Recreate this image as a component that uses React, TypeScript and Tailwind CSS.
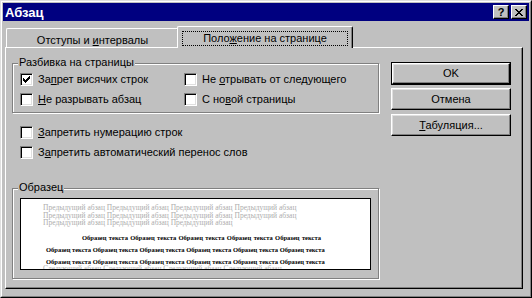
import React from "react";

const UI = "font-['Liberation_Sans',Arial,sans-serif] text-[11px] leading-[13px] text-black";

function Check({ checked }: { checked?: boolean }) {
  return (
    <div className="w-[13px] h-[13px] shrink-0 border border-t-[#808080] border-l-[#808080] border-r-white border-b-white bg-white shadow-[inset_1px_1px_0_#000,inset_-1px_-1px_0_#dfdfdf] flex items-center justify-center">
      {checked && (
        <svg width="7" height="7" viewBox="0 0 7 7" shapeRendering="crispEdges">
          <path
            fill="#000"
            d="M6 0h1v1h-1z M5 1h2v1h-2z M0 2h1v1h-1z M4 2h3v1h-3z M0 3h2v1h-2z M3 3h3v1h-3z M0 4h5v1h-5z M1 5h3v1h-3z M2 6h1v1h-1z"
          />
        </svg>
      )}
    </div>
  );
}

function Row({ checked, children }: { checked?: boolean; children: React.ReactNode }) {
  return (
    <div className="flex items-center gap-[5px] h-[13px] whitespace-nowrap">
      <Check checked={checked} />
      <span>{children}</span>
    </div>
  );
}

function U({ children }: { children: React.ReactNode }) {
  return <span className="underline decoration-1 underline-offset-[1px]">{children}</span>;
}

function Btn({ children, def }: { children: React.ReactNode; def?: boolean }) {
  const inner = (
    <div className="h-full w-full border border-t-white border-l-white border-r-black border-b-black shadow-[inset_-1px_-1px_0_#808080,inset_1px_1px_0_#dfdfdf] flex items-center justify-center">
      {children}
    </div>
  );
  if (def) return <div className="h-[23px] border border-black">{inner}</div>;
  return <div className="h-[22px]">{inner}</div>;
}

const GREY = "Предыдущий абзац";
const BLACK = "Образец текста";

export default function App() {
  return (
    <div className={`w-[532px] h-[298px] bg-[#c0c0c0] border border-t-[#dfdfdf] border-l-[#dfdfdf] border-r-black border-b-black ${UI}`}>
      <div className="h-full border border-t-white border-l-white border-r-[#808080] border-b-[#808080] p-px flex flex-col">
        {/* Title bar */}
        <div className="h-[18px] shrink-0 bg-[#000080] flex items-center pl-[2px] pr-[2px]">
          <span className="text-white font-bold text-[13px] leading-[15px] flex-1">Абзац</span>
          <div className="flex gap-[2px]">
            <div className="w-[16px] h-[14px] bg-[#c0c0c0] border border-t-white border-l-white border-r-black border-b-black shadow-[inset_-1px_-1px_0_#808080] flex items-center justify-center">
              <span className="font-bold text-[11px] leading-[11px] mt-[1px]">?</span>
            </div>
            <div className="w-[16px] h-[14px] bg-[#c0c0c0] border border-t-white border-l-white border-r-black border-b-black shadow-[inset_-1px_-1px_0_#808080] flex items-center justify-center">
              <svg width="8" height="7" viewBox="0 0 8 7" shapeRendering="crispEdges">
                <path
                  fill="#000"
                  d="M0 0h2v1h-2z M6 0h2v1h-2z M1 1h2v1h-2z M5 1h2v1h-2z M2 2h4v1h-4z M3 3h2v1h-2z M2 4h4v1h-4z M1 5h2v1h-2z M5 5h2v1h-2z M0 6h2v1h-2z M6 6h2v1h-2z"
                />
              </svg>
            </div>
          </div>
        </div>

        {/* Tabs */}
        <div className="h-[26px] shrink-0 flex items-end pl-[3px]">
          <div className="w-[173px] h-[19px] border-l border-t border-white border-r border-r-black rounded-t-[2px] shadow-[inset_-1px_0_0_#808080] flex justify-center pt-[5px]">
            <span>
              Отступы и <U>и</U>нтервалы
            </span>
          </div>
          <div className="relative z-10 -ml-[2px] -mb-px w-[176px] h-[22px] bg-[#c0c0c0] border-l border-t border-white border-r border-r-black rounded-t-[2px] shadow-[inset_-1px_0_0_#808080] px-[4px] pt-[4px]">
            <div className="h-[15px] border border-dotted border-black flex items-center justify-center">
              <span>
                Поло<U>ж</U>ение на странице
              </span>
            </div>
          </div>
        </div>

        {/* Panel */}
        <div className="ml-[2px] w-[518px] h-[242px] shrink-0 border border-t-white border-l-white border-r-black border-b-black shadow-[inset_-1px_-1px_0_#808080] flex">
          <div className="ml-[6px] mt-[15px] w-[367px] flex flex-col">
            {/* Group 1 */}
            <div className="relative h-[50px] border border-[#808080] shadow-[1px_1px_0_#fff,inset_1px_1px_0_#fff] pl-[7px] pt-[9px]">
              <span className="absolute left-[5px] -top-[8px] px-[1px] bg-[#c0c0c0] whitespace-nowrap">Разбивка на страницы</span>
              <div className="grid grid-cols-[164px_1fr] gap-y-[7px]">
                <Row checked>
                  За<U>п</U>рет висячих строк
                </Row>
                <Row>
                  Не <U>о</U>трывать от следующего
                </Row>
                <Row>
                  <U>Н</U>е разрывать абзац
                </Row>
                <Row>
                  С но<U>в</U>ой страницы
                </Row>
              </div>
            </div>

            <div className="mt-[13px] pl-[8px] flex flex-col gap-[7px]">
              <Row>
                <U>З</U>апретить нумерацию строк
              </Row>
              <Row>
                З<U>а</U>претить автоматический перенос слов
              </Row>
            </div>

            {/* Group 2 */}
            <div className="relative mt-[29px] h-[91px] border border-[#808080] shadow-[1px_1px_0_#fff,inset_1px_1px_0_#fff] pl-[7px] pt-[9px]">
              <span className="absolute left-[5px] -top-[8px] px-[1px] bg-[#c0c0c0]">Образец</span>
              <div className="w-[351px] h-[72px] border border-black bg-white overflow-hidden pt-[5px] font-['Liberation_Serif','Times_New_Roman',serif]">
                <div className="pl-[22px] text-[7.5px] leading-[7.5px] text-[#adadad]">
                  <div className="w-[252px] whitespace-nowrap [text-align-last:justify]">
                    {`${GREY} ${GREY} ${GREY} ${GREY}`}
                  </div>
                  <div className="w-[252px] whitespace-nowrap [text-align-last:justify]">
                    {`${GREY} ${GREY} ${GREY} ${GREY}`}
                  </div>
                  <div className="whitespace-nowrap">{`${GREY} ${GREY} ${GREY}`}</div>
                </div>
                <div className="mt-[5px] pl-[25px] text-[6.5px] leading-[12px] font-bold">
                  <div className="ml-[36px] w-[239px] whitespace-nowrap [text-align-last:justify]">
                    {`${BLACK} ${BLACK} ${BLACK} ${BLACK} ${BLACK}`}
                  </div>
                  <div className="w-[275px] whitespace-nowrap [text-align-last:justify]">
                    {`${BLACK} ${BLACK} ${BLACK} ${BLACK} ${BLACK} ${BLACK}`}
                  </div>
                  <div className="w-[275px] whitespace-nowrap [text-align-last:justify]">
                    {`${BLACK} ${BLACK} ${BLACK} ${BLACK} ${BLACK} ${BLACK}`}
                  </div>
                </div>
                <div className="-mt-[3px] pl-[22px] text-[7.5px] leading-[7.5px] text-[#adadad] whitespace-nowrap">
                  {`Следующий абзац Следующий абзац Следующий абзац Следующий абзац`}
                </div>
              </div>
            </div>
          </div>

          {/* Buttons */}
          <div className="ml-[12px] mt-[14px] w-[120px] flex flex-col">
            <Btn def>OK</Btn>
            <div className="mt-[3px]">
              <Btn>Отмена</Btn>
            </div>
            <div className="mt-[4px]">
              <Btn>
                <span>
                  <U>Т</U>абуляция...
                </span>
              </Btn>
            </div>
          </div>
        </div>
      </div>
    </div>
  );
}
